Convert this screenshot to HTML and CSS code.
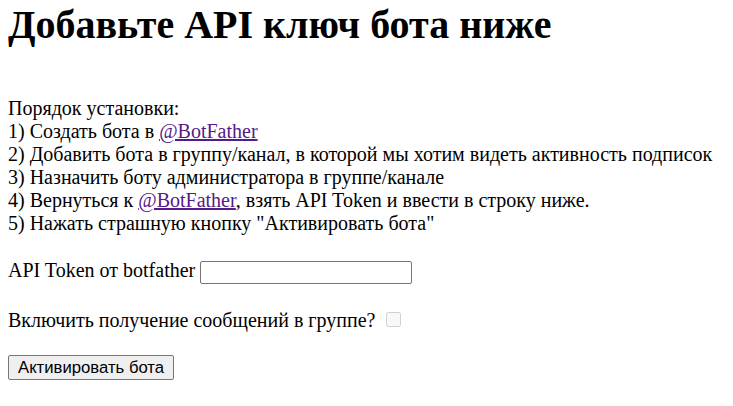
FILE: index.html
```html
<!DOCTYPE html>
<html lang="ru">

<head>
    <meta charset="UTF-8">
    <meta name="viewport" content="width=device-width, initial-scale=1.0">
    <title>Добавьте API ключ бота</title>
    <link rel="stylesheet" href="styles.css">
</head>

<body>
    <h1 class="title">Добавьте API ключ бота ниже</h1>

    <div class="steps">
        Порядок установки:<br>
        1) Создать бота в <a href="#">@BotFather</a><br>
        2) Добавить бота в группу/канал, в которой мы хотим видеть активность подписок<br>
        3) Назначить боту администратора в группе/канале<br>
        4) Вернуться к <a href="#">@BotFather</a>, взять API Token и ввести в строку ниже.<br>
        5) Нажать страшную кнопку "Активировать бота"
    </div>

    <form class="bot-form" onsubmit="return false">
        <div class="field">
            <label for="token">API Token от botfather</label>
            <input type="text" class="token-input" id="token">
        </div>
        <div class="field">
            <label for="groups">Включить получение сообщений в группе?</label>
            <input type="checkbox" class="check" id="groups" disabled>
        </div>
        <button class="submit" type="submit">Активировать бота</button>
    </form>
</body>

</html>
```

FILE: styles.css
```css
body {
    margin: 0;
    padding: 2px 8px 0;
    font-family: 'Liberation Serif', serif;
    font-size: 20px;
    line-height: 23px;
    color: #000;
    background: #fff;
}

.title {
    margin: 0;
    font-size: 40px;
    line-height: 46px;
    font-weight: bold;
}

.steps {
    margin-top: 49px;
}

.steps a {
    color: #551a8b;
}

.bot-form {
    margin-top: 24px;
}

.field {
    margin-bottom: 25px;
}

.field:last-of-type {
    margin-bottom: 23px;
}

.token-input {
    width: 206px;
    height: 19px;
    padding: 1px 2px;
    border: 1px solid #767676;
    border-radius: 2px;
    font-family: 'Liberation Sans', sans-serif;
    font-size: 16px;
    vertical-align: baseline;
}

.check {
    width: 15px;
    height: 15px;
    margin: 0 0 0 6px;
    vertical-align: baseline;
}

.submit {
    padding: 2px 9px;
    height: 25px;
    background: #efefef;
    border: 1px solid #767676;
    border-radius: 2px;
    font-family: 'Liberation Sans', sans-serif;
    font-size: 16.7px;
    color: #000;
}
```
